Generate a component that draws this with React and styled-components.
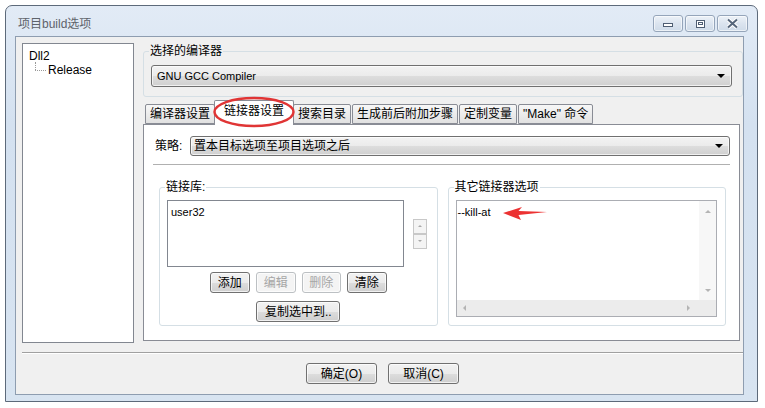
import React from 'react';
import styled, { createGlobalStyle } from 'styled-components';

const GlobalStyle = createGlobalStyle`
  html, body { margin: 0; background: #fff; }
  body {
    font-family: "Liberation Sans", "Noto Sans CJK SC", sans-serif;
    font-size: 12px;
    line-height: 14px;
    color: #000;
  }
  * { box-sizing: border-box; }
`;

const Page = styled.div`
  padding: 5px 0 0 5px;
`;

const Window = styled.div`
  width: 753px;
  height: 397px;
  border: 1px solid #5d6a7a;
  border-radius: 7px 7px 0 0;
  background: linear-gradient(#e2ebf6, #d4e1f0 30%, #d8e4f1);
  display: flex;
  flex-direction: column;
`;

const TitleBar = styled.div`
  height: 30px;
  flex: none;
  display: flex;
  align-items: center;
  justify-content: space-between;
  padding: 5px 9px 0 12px;
`;

const Title = styled.span`
  color: #5e636b;
`;

const CaptionGroup = styled.div`
  display: flex;
  gap: 2px;
`;

const CaptionButton = styled.div`
  width: ${p => p.$w}px;
  height: 17px;
  border: 1px solid #95a5ba;
  border-radius: 3px;
  background: linear-gradient(#edf2f8, #dbe4ef 50%, #cfdbe9);
  box-shadow: inset 0 0 0 1px rgba(255, 255, 255, 0.6);
  display: flex;
  align-items: center;
  justify-content: center;
`;

const Client = styled.div`
  flex: 1;
  margin: 0 13px 6px 9px;
  border: 1px solid #8e9db0;
  background: #f0f0f0;
  padding: 6px 0 0 6px;
  display: flex;
  flex-direction: column;
`;

const Main = styled.div`
  display: flex;
  gap: 9px;
  height: 300px;
  flex: none;
`;

const Tree = styled.div`
  width: 112px;
  border: 1px solid #828790;
  background: #fff;
  padding: 5px 6px;
`;

const TreeNode = styled.div`
  position: relative;
  padding-left: ${p => (p.$child ? 19 : 0)}px;

  ${p => p.$child && `
    &::before {
      content: "";
      position: absolute;
      left: 6px;
      top: -1px;
      height: 8px;
      border-left: 1px dotted #9a9a9a;
    }
    &::after {
      content: "";
      position: absolute;
      left: 6px;
      top: 7px;
      width: 11px;
      border-top: 1px dotted #9a9a9a;
    }
  `}
`;

const Column = styled.div`
  flex: 1;
  display: flex;
  flex-direction: column;
  min-width: 0;
`;

const Group = styled.fieldset`
  margin: ${p => p.$m || 0};
  padding: ${p => p.$pad};
  border: 1px solid #d5dfe5;
  border-radius: 3px;
  min-width: 0;
  display: flex;
  flex-direction: column;

  legend {
    padding: 0 1px;
    margin-left: -2px;
    line-height: 14px;
  }
`;

const Combo = styled.div`
  height: ${p => p.$h}px;
  flex: 1 0 auto;
  border: 1px solid #707070;
  border-radius: 3px;
  background: linear-gradient(#f3f3f3 0%, #ebebeb 50%, #dddddd 51%, #d0d0d0 100%);
  box-shadow: inset 0 0 0 1px rgba(255, 255, 255, 0.7);
  display: flex;
  align-items: center;
  padding: 0 6px 0 ${p => p.$pl}px;
  font-size: ${p => p.$fs || 12}px;

  span { flex: 1; }

  &::after {
    content: "";
    border-left: 4px solid transparent;
    border-right: 4px solid transparent;
    border-top: 4px solid #000;
  }
`;

const TabRow = styled.div`
  display: flex;
  align-items: flex-end;
  gap: 1px;
  margin-top: 3px;
  padding-left: 2px;
`;

const Tab = styled.div`
  position: relative;
  height: ${p => (p.$active ? 25 : 20)}px;
  padding: ${p => (p.$active ? '3px 9px 0' : '0 4px')};
  margin: 0 ${p => (p.$active ? -2 : 0)}px ${p => (p.$active ? -1 : 0)}px;
  z-index: ${p => (p.$active ? 1 : 0)};
  border: 1px solid #898c95;
  border-bottom: ${p => (p.$active ? 'none' : '1px solid #898c95')};
  border-radius: 2px 2px 0 0;
  background: ${p => (p.$active ? '#fff' : 'linear-gradient(#f7f7f7, #ececec 50%, #e1e1e1)')};
  display: flex;
  align-items: ${p => (p.$active ? 'flex-start' : 'center')};
  white-space: nowrap;
`;

const Circle = styled.svg`
  position: absolute;
  left: -3px;
  top: -5px;
  overflow: visible;
`;

const Panel = styled.div`
  height: 217px;
  margin-right: 3px;
  border: 1px solid #898c95;
  background: #fff;
  padding: 11px 9px 0 11px;
  display: flex;
  flex-direction: column;
`;

const FieldRow = styled.div`
  display: flex;
  align-items: center;
`;

const FieldLabel = styled.span`
  width: 35px;
  flex: none;
`;

const Rule = styled.div`
  margin: ${p => p.$m};
  border-top: 1px solid ${p => p.$c || '#b0b0b0'};
  border-bottom: 1px solid #fff;
`;

const GroupGrid = styled.div`
  display: grid;
  grid-template-columns: 1fr 1fr;
  gap: 10px;
  margin: 14px 4px 0 4px;
`;

const ListRow = styled.div`
  display: flex;
  align-items: center;
  gap: 9px;
`;

const ListBox = styled.div`
  width: 237px;
  height: 67px;
  border: 1px solid #828790;
  background: #fff;
  padding: 4px 3px;
  font-size: 11px;
`;

const Spin = styled.div`
  display: flex;
  flex-direction: column;
`;

const SpinButton = styled.div`
  width: 14px;
  height: 15px;
  border: 1px solid #c8c8c8;
  background: #f4f4f4;
  display: flex;
  align-items: center;
  justify-content: center;

  &::after {
    content: "";
    border-left: 2px solid transparent;
    border-right: 2px solid transparent;
    ${p => (p.$up ? 'border-bottom' : 'border-top')}: 2px solid #a8a8a8;
  }
`;

const ButtonRow = styled.div`
  display: flex;
  justify-content: center;
  gap: ${p => p.$gap}px;
  margin-top: ${p => p.$mt}px;
`;

const Button = styled.button`
  width: ${p => p.$w}px;
  height: 21px;
  padding: 0;
  font: inherit;
  line-height: 14px;
  color: ${p => (p.disabled ? '#a6a6a6' : '#000')};
  border: 1px solid ${p => (p.disabled ? '#bcc0c3' : '#707070')};
  border-radius: 3px;
  background: ${p => (p.disabled
    ? '#f4f4f4'
    : 'linear-gradient(#f2f2f2 0%, #ebebeb 50%, #dddddd 51%, #cfcfcf 100%)')};
  box-shadow: inset 0 0 0 1px rgba(255, 255, 255, 0.7);
`;

const TextArea = styled.div`
  height: 117px;
  border: 1px solid #abadb3;
  background: #fff;
  display: grid;
  grid-template-columns: 1fr 17px;
  grid-template-rows: 1fr 16px;
`;

const TextContent = styled.div`
  position: relative;
  padding: 4px 1px;
  font-size: 11px;
`;

const ScrollBar = styled.div`
  background: ${p => (p.$v ? '#f7f7f7' : '#ececec')};
  display: flex;
  flex-direction: ${p => (p.$v ? 'column' : 'row')};
  justify-content: space-between;
  align-items: center;
  padding: ${p => (p.$v ? '9px 0 8px' : '0 9px 0 6px')};
`;

const ScrollArrow = styled.span`
  width: 0;
  height: 0;
  ${p => {
    const side = { up: 'bottom', down: 'top', left: 'right', right: 'left' }[p.$dir];
    const cross = p.$dir === 'up' || p.$dir === 'down' ? ['left', 'right'] : ['top', 'bottom'];
    return `
      border-${side}: 3px solid #b4b4b4;
      border-${cross[0]}: 3px solid transparent;
      border-${cross[1]}: 3px solid transparent;
    `;
  }}
`;

const Corner = styled.div`
  background: #ececec;
`;

const Arrow = styled.svg`
  position: absolute;
  left: 46px;
  top: 4px;
`;

const Footer = styled.div`
  margin-right: 0;
`;

function CaptionButtons() {
  return (
    <CaptionGroup>
      <CaptionButton $w={30}>
        <svg width="12" height="8" viewBox="0 0 12 8">
          <rect x="1.5" y="3.5" width="9" height="3" fill="#fff" stroke="#4f5e73" />
        </svg>
      </CaptionButton>
      <CaptionButton $w={30}>
        <svg width="11" height="10" viewBox="0 0 11 10">
          <rect x="1.5" y="1.5" width="8" height="7" fill="#fff" stroke="#4f5e73" />
          <rect x="3.5" y="3.5" width="4" height="2" fill="none" stroke="#4f5e73" />
        </svg>
      </CaptionButton>
      <CaptionButton $w={31}>
        <svg width="13" height="11" viewBox="0 0 13 11">
          <path d="M2 1.5 L11 9.5 M11 1.5 L2 9.5" stroke="#fff" strokeWidth="4" />
          <path d="M2 1.5 L11 9.5 M11 1.5 L2 9.5" stroke="#56667b" strokeWidth="2" />
        </svg>
      </CaptionButton>
    </CaptionGroup>
  );
}

const tabs = ['编译器设置', '链接器设置', '搜索目录', '生成前后附加步骤', '定制变量', '"Make" 命令'];

export default function App() {
  return (
    <Page>
      <GlobalStyle />
      <Window>
        <TitleBar>
          <Title>项目build选项</Title>
          <CaptionButtons />
        </TitleBar>

        <Client>
          <Main>
            <Tree>
              <TreeNode>Dll2</TreeNode>
              <TreeNode $child>Release</TreeNode>
            </Tree>

            <Column>
              <Group $m="1px 0 0 0" $pad="7px 10px 9px 7px">
                <legend>选择的编译器</legend>
                <Combo $h={22} $pl={5} $fs={11}>
                  <span>GNU GCC Compiler</span>
                </Combo>
              </Group>

              <TabRow>
                {tabs.map((t, i) => (
                  <Tab key={t} $active={i === 1}>
                    {t}
                    {i === 1 && (
                      <Circle width="84" height="32" viewBox="0 0 84 32">
                        <ellipse cx="42" cy="16" rx="39.5" ry="14" fill="none" stroke="#e03535" strokeWidth="2.5" />
                      </Circle>
                    )}
                  </Tab>
                ))}
              </TabRow>

              <Panel>
                <FieldRow>
                  <FieldLabel>策略:</FieldLabel>
                  <Combo $h={20} $pl={3}>
                    <span>置本目标选项至项目选项之后</span>
                  </Combo>
                </FieldRow>

                <Rule $m="8px 0 0 -2px" />

                <GroupGrid>
                  <Group $pad="6px 7px 3px 7px">
                    <legend>链接库:</legend>
                    <ListRow>
                      <ListBox>user32</ListBox>
                      <Spin>
                        <SpinButton $up />
                        <SpinButton />
                      </Spin>
                    </ListRow>
                    <ButtonRow $gap={6} $mt={5}>
                      <Button $w={40}>添加</Button>
                      <Button $w={40} disabled>编辑</Button>
                      <Button $w={39} disabled>删除</Button>
                      <Button $w={40}>清除</Button>
                    </ButtonRow>
                    <ButtonRow $gap={0} $mt={8}>
                      <Button $w={84}>复制选中到..</Button>
                    </ButtonRow>
                  </Group>

                  <Group $pad="6px 8px 7px 7px">
                    <legend>其它链接器选项</legend>
                    <TextArea>
                      <TextContent>
                        --kill-at
                        <Arrow width="46" height="16" viewBox="0 0 46 16">
                          <path d="M0 8 L19 2 L15.5 6 L44 7 L15.5 10 L18 15 Z" fill="#ec3232" />
                        </Arrow>
                      </TextContent>
                      <ScrollBar $v>
                        <ScrollArrow $dir="up" />
                        <ScrollArrow $dir="down" />
                      </ScrollBar>
                      <ScrollBar>
                        <ScrollArrow $dir="left" />
                        <ScrollArrow $dir="right" />
                      </ScrollBar>
                      <Corner />
                    </TextArea>
                  </Group>
                </GroupGrid>
              </Panel>
            </Column>
          </Main>

          <Footer>
            <Rule $m="9px 0 0 0" $c="#a0a0a0" />
            <ButtonRow $gap={11} $mt={9}>
              <Button $w={71}>确定(O)</Button>
              <Button $w={71}>取消(C)</Button>
            </ButtonRow>
          </Footer>
        </Client>
      </Window>
    </Page>
  );
}
